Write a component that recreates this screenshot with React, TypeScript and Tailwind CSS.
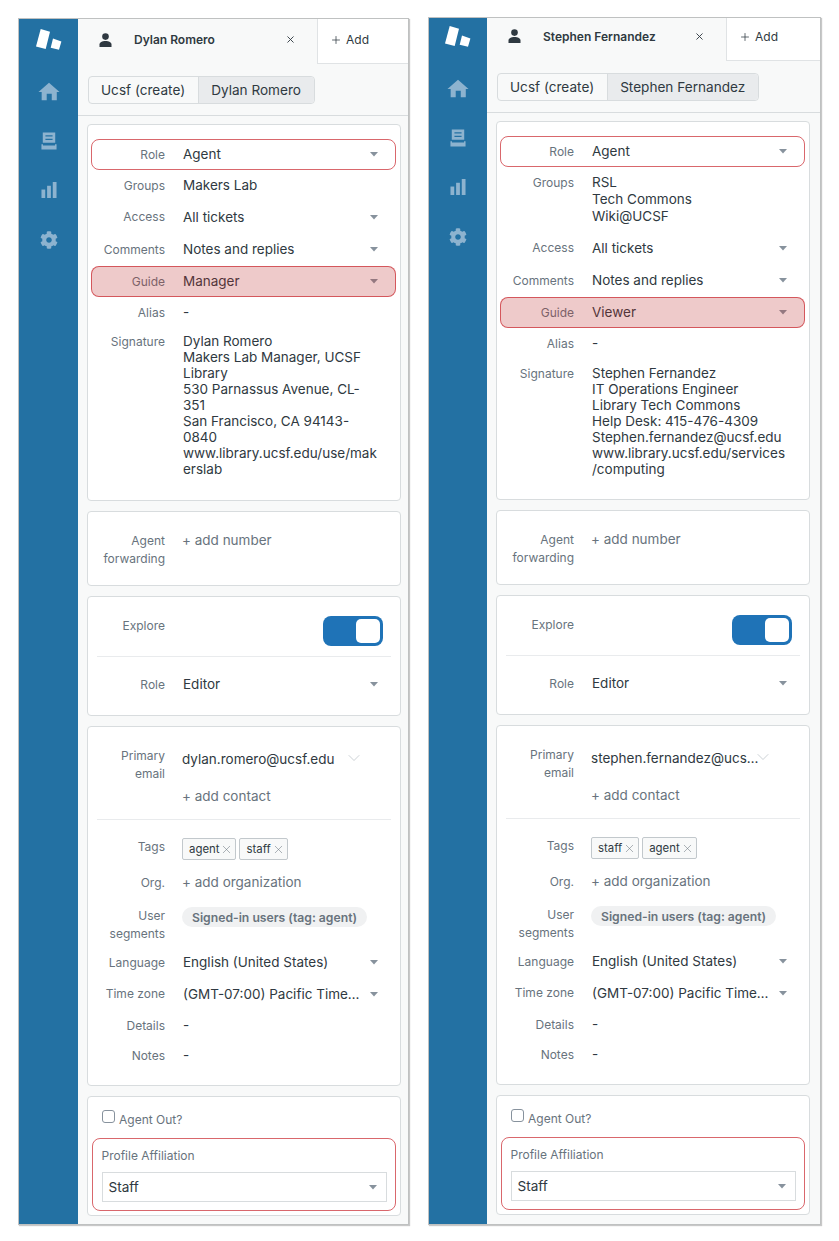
import React from "react";
import { X, Plus, ChevronDown } from "lucide-react";
import { FaCog } from "react-icons/fa";

const Caret = () => (
  <svg width="10" height="5" viewBox="0 0 10 5" className="shrink-0 text-[#87929d]">
    <path d="M1 0h8L5 4.6z" fill="currentColor" />
  </svg>
);

const Logo = () => (
  <svg width="26" height="21" viewBox="0 0 26 21">
    <path d="M4.7 0 L14 2.7 L9.7 20 L0 17.4 Z" fill="#fff" />
    <path d="M17 9.4 L25.4 12.4 L23 20.7 L14.7 18.7 Z" fill="#fff" />
  </svg>
);

const HomeIcon = () => (
  <svg width="22" height="19" viewBox="0 0 24 20" fill="currentColor">
    <path d="M12 0.5 L23.5 10.5 H20.5 V19.5 H15 V12.5 H9.5 V19.5 H4 V10.5 H0.5 Z" />
  </svg>
);

const InboxIcon = () => (
  <svg width="16" height="18" viewBox="0 0 18 20" fill="currentColor">
    <path d="M2 0.5 H16 V12 H2 Z M5 3.4 V5 H13 V3.4 Z M5 7.4 V9 H13 V7.4 Z" fillRule="evenodd" />
    <path d="M0.5 13.6 H17.5 V19.5 H0.5 Z M2.2 13.6 V15 H15.8 V13.6 Z" fillRule="evenodd" />
  </svg>
);

const ChartIcon = () => (
  <svg width="16" height="16" viewBox="0 0 16 17" fill="currentColor">
    <rect x="0" y="8" width="4" height="9" />
    <rect x="6" y="4" width="4" height="13" />
    <rect x="12" y="0" width="4" height="17" />
  </svg>
);

const PersonIcon = () => (
  <svg width="13" height="14" viewBox="0 0 13 14" fill="#2f3941">
    <circle cx="6.5" cy="3.6" r="3.3" />
    <path d="M0.5 14 V11.4 C0.5 9.2 3 7.9 6.5 7.9 C10 7.9 12.5 9.2 12.5 11.4 V14 Z" />
  </svg>
);

const Card = ({ children, className = "" }: { children: React.ReactNode; className?: string }) => (
  <div className={`ml-[9px] w-[314px] rounded-[4px] border border-[#d8dcde] bg-white ${className}`}>
    {children}
  </div>
);

type RowProps = {
  label: React.ReactNode;
  children?: React.ReactNode;
  caret?: boolean;
  mark?: "outline" | "fill";
  className?: string;
  top?: boolean;
};

const Row = ({ label, children, caret, mark, className = "h-[31px]", top }: RowProps) => (
  <div className={`relative mx-[3px] flex ${top ? "items-start" : "items-center"} ${className}`}>
    <div className="w-[74px] shrink-0 text-right text-[12px] leading-[18px] text-[#68737d]">{label}</div>
    <div className="ml-[18px] min-w-0 flex-1 text-[13.5px] leading-[17px] text-[#2f3941]">{children}</div>
    {caret && (
      <div className="mr-[18px] ml-2">
        <Caret />
      </div>
    )}
    {mark === "outline" && (
      <div className="absolute inset-y-0 right-px left-0 rounded-[8px] border-[1.5px] border-[#c9262e]/70" />
    )}
    {mark === "fill" && (
      <div className="absolute inset-y-0 right-px left-0 rounded-[8px] border-[1.5px] border-[#c9262e]/70 bg-[#bc2d2d]/25" />
    )}
  </div>
);

const Tag = ({ name }: { name: string }) => (
  <span className="inline-flex h-[22px] items-center gap-px rounded-[2px] border border-[#c2c8cc] bg-[#f8f9f9] pr-[2px] pl-[6px] text-[11.4px] text-[#2f3941]">
    {name}
    <X size={13} strokeWidth={1} className="text-[#68737d]" />
  </span>
);

type PanelProps = {
  name: string;
  widthClass: string;
  sidebarClass: string;
  logoClass: string;
  tabClass: string;
  tabPad: string;
  personClass: string;
  guide: string;
  groups: string[];
  signature: string[];
  sigClass: string;
  email: string;
  tags: string[];
  bottomClass: string;
};

const Panel = (p: PanelProps) => (
  <div className={`flex h-fit border border-[#bfc1c1] shadow-[1px_1px_1px_#c8c8c8] ${p.widthClass}`}>
    {/* Sidebar */}
    <div className={`flex shrink-0 flex-col items-center bg-[#2371a3] text-[#8db3cf] ${p.sidebarClass}`}>
      <div className={`flex items-end ${p.logoClass}`}>
        <Logo />
      </div>
      <div className="mt-[31px] flex h-[20px] items-center">
        <HomeIcon />
      </div>
      <div className="mt-[30px] flex h-[20px] items-center">
        <InboxIcon />
      </div>
      <div className="mt-[29px] flex h-[20px] items-center">
        <ChartIcon />
      </div>
      <div className="mt-[30px] flex h-[20px] items-center">
        <FaCog size={18} />
      </div>
    </div>

    <div className={`min-w-0 flex-1 bg-[#f8f9f9] ${p.bottomClass}`}>
      {/* Tabs */}
      <div className={`flex ${p.tabClass}`}>
        <div className={`relative flex w-[239px] items-center pl-[56px] ${p.tabPad}`}>
          <div className={`absolute left-[21px] ${p.personClass}`}>
            <PersonIcon />
          </div>
          <span className="text-[12px] font-semibold text-[#2f3941]">{p.name}</span>
          <X size={11} strokeWidth={2} className="absolute left-[207px] text-[#2f3941]" />
        </div>
        <div className={`flex flex-1 items-center gap-[4px] border-b border-l border-[#e0e3e5] bg-white pt-px pl-[12px] text-[12px] text-[#2f3941] ${p.tabPad}`}>
          <Plus size={12} strokeWidth={1.5} />
          Add
        </div>
      </div>

      {/* Breadcrumb */}
      <div className="border-b border-[#d8dcde] pt-[12px] pb-[11px] pl-[10px]">
        <div className="flex h-[28px] w-fit rounded-[4px] border border-[#d8dcde] text-[13.6px] text-[#2f3941]">
          <div className="flex items-center border-r border-[#d8dcde] pr-[13px] pl-[12px]">Ucsf (create)</div>
          <div className="flex items-center rounded-r-[4px] bg-[#e9ebed] pr-[13px] pl-[12px]">{p.name}</div>
        </div>
      </div>

      {/* Role and access */}
      <Card className="mt-[8px] pt-[14px]">
        <Row label="Role" caret mark="outline">Agent</Row>
        <div className="relative mx-[3px] flex items-start py-[7px]">
          <div className="w-[74px] shrink-0 text-right text-[12px] leading-[17px] text-[#68737d]">Groups</div>
          <div className="ml-[18px] text-[13.5px] leading-[17px] text-[#2f3941]">
            {p.groups.map((g) => (
              <div key={g}>{g}</div>
            ))}
          </div>
        </div>
        <Row label="Access" caret className="h-[32px]">All tickets</Row>
        <Row label="Comments" caret className="h-[33px]">Notes and replies</Row>
        <Row label="Guide" caret mark="fill">{p.guide}</Row>
        <Row label="Alias">-</Row>
        <div className={`mx-[3px] flex items-start ${p.sigClass}`}>
          <div className="w-[74px] shrink-0 text-right text-[12px] leading-[18px] text-[#68737d]">Signature</div>
          <div className="ml-[18px] text-[13.5px] leading-[16px] text-[#2f3941]">
            {p.signature.map((line) => (
              <div key={line}>{line}</div>
            ))}
          </div>
        </div>
      </Card>

      {/* Agent forwarding */}
      <Card className="mt-[10px] h-[75px]">
        <Row label={<>Agent<br />forwarding</>} top className="pt-[20px]">
          <span className="-ml-px block text-[#68737d]">+ add number</span>
        </Row>
      </Card>

      {/* Explore */}
      <Card className="mt-[10px] h-[120px] pt-[19px]">
        <Row label={<span className="block pt-px">Explore</span>} top className="h-[30px]">
          <div className="mr-[14px] ml-auto flex h-[30px] w-[60px] items-center justify-end rounded-[8px] bg-[#1f73b7] pr-[3px]">
            <div className="h-[24px] w-[24px] rounded-[5px] bg-white" />
          </div>
        </Row>
        <div className="mx-[9px] mt-[10px] h-px bg-[#e9ebed]" />
        <Row label="Role" caret className="mt-[12px] h-[31px]">Editor</Row>
      </Card>

      {/* Contact */}
      <Card className="mt-[10px] h-[360px] pt-[20px]">
        <Row label={<>Primary<br />email</>} top className="h-[40px]">
          <div className="mt-[3px] flex items-center">
            <span className="-ml-px block w-[170px] truncate leading-[18px]">{p.email}</span>
            <ChevronDown size={20} strokeWidth={1} className="-mt-[2px] -ml-[8px] shrink-0 text-[#c2c8cc]" />
          </div>
        </Row>
        <Row label="" className="h-[18px]">
          <span className="-ml-px block text-[#68737d]">+ add contact</span>
        </Row>
        <div className="mx-[9px] mt-[14px] h-px bg-[#e9ebed]" />
        <Row label="Tags" top className="mt-[18px] h-[22px]">
          <div className="-ml-px flex gap-[3px]">
            {p.tags.map((t) => (
              <Tag key={t} name={t} />
            ))}
          </div>
        </Row>
        <Row label="Org." className="mt-[7px] h-[31px]">
          <span className="-ml-px block text-[#68737d]">+ add organization</span>
        </Row>
        <Row label={<>User<br />segments</>} top className="mt-[9px] h-[37px]">
          <span className="-ml-px inline-flex h-[20px] items-center rounded-full bg-[#f0f1f2] px-[10px] text-[12.2px] font-semibold text-[#68737d]">
            Signed-in users (tag: agent)
          </span>
        </Row>
        <Row label="Language" caret className="mt-[3px] h-[31px]">English (United States)</Row>
        <Row label="Time zone" caret className="h-[32px]">
          <span className="block truncate">(GMT-07:00) Pacific Time (US &amp; Canada)</span>
        </Row>
        <Row label="Details">-</Row>
        <Row label="Notes" className="-mt-px h-[31px]">-</Row>
      </Card>

      {/* Agent out */}
      <Card className="mt-[10px] h-[120px]">
        <div className="flex items-start pt-[13px] pl-[14px]">
          <div className="h-[13px] w-[13px] rounded-[3px] border border-[#87929d] bg-white" />
          <span className="mt-px ml-[4px] text-[12px] leading-[18px] text-[#68737d]">Agent Out?</span>
        </div>
        <div className="mt-[9px] ml-[4px] h-[73px] w-[304px] rounded-[8px] border-[1.5px] border-[#c9262e]/70 px-[8.5px] pt-[8px]">
          <div className="text-[12px] leading-[18px] text-[#68737d]">Profile Affiliation</div>
          <div className="mt-[7px] flex h-[30px] items-center justify-between border border-[#d8dcde] pr-[8px] pl-[6px] text-[13.6px] text-[#2f3941]">
            Staff
            <Caret />
          </div>
        </div>
      </Card>
    </div>
  </div>
);

export default function App() {
  return (
    <div className="flex h-[1241px] w-[839px] items-start bg-white font-['Inter',sans-serif]">
      <div className="mt-[18px] ml-[18px]">
        <Panel
          name="Dylan Romero"
          widthClass="w-[391px]"
          sidebarClass="w-[59px]"
          logoClass="h-[31px]"
          tabClass="h-[45px]"
          tabPad="pb-[4px]"
          personClass="top-[14px]"
          guide="Manager"
          groups={["Makers Lab"]}
          signature={[
            "Dylan Romero",
            "Makers Lab Manager, UCSF",
            "Library",
            "530 Parnassus Avenue, CL-",
            "351",
            "San Francisco, CA 94143-",
            "0840",
            "www.library.ucsf.edu/use/mak",
            "erslab",
          ]}
          sigClass="mt-[5px] pb-[23px]"
          email="dylan.romero@ucsf.edu"
          tags={["agent", "staff"]}
          bottomClass="pb-[8px]"
        />
      </div>
      <div className="mt-[17px] ml-[19px]">
        <Panel
          name="Stephen Fernandez"
          widthClass="w-[393px]"
          sidebarClass="w-[58px]"
          logoClass="h-[29px]"
          tabClass="h-[43px]"
          tabPad="pb-[6px]"
          personClass="top-[11px]"
          guide="Viewer"
          groups={["RSL", "Tech Commons", "Wiki@UCSF"]}
          signature={[
            "Stephen Fernandez",
            "IT Operations Engineer",
            "Library Tech Commons",
            "Help Desk: 415-476-4309",
            "Stephen.fernandez@ucsf.edu",
            "www.library.ucsf.edu/services",
            "/computing",
          ]}
          sigClass="mt-[6px] pb-[22px]"
          email="stephen.fernandez@ucsf.edu"
          tags={["staff", "agent"]}
          bottomClass="pb-[9px]"
        />
      </div>
    </div>
  );
}
